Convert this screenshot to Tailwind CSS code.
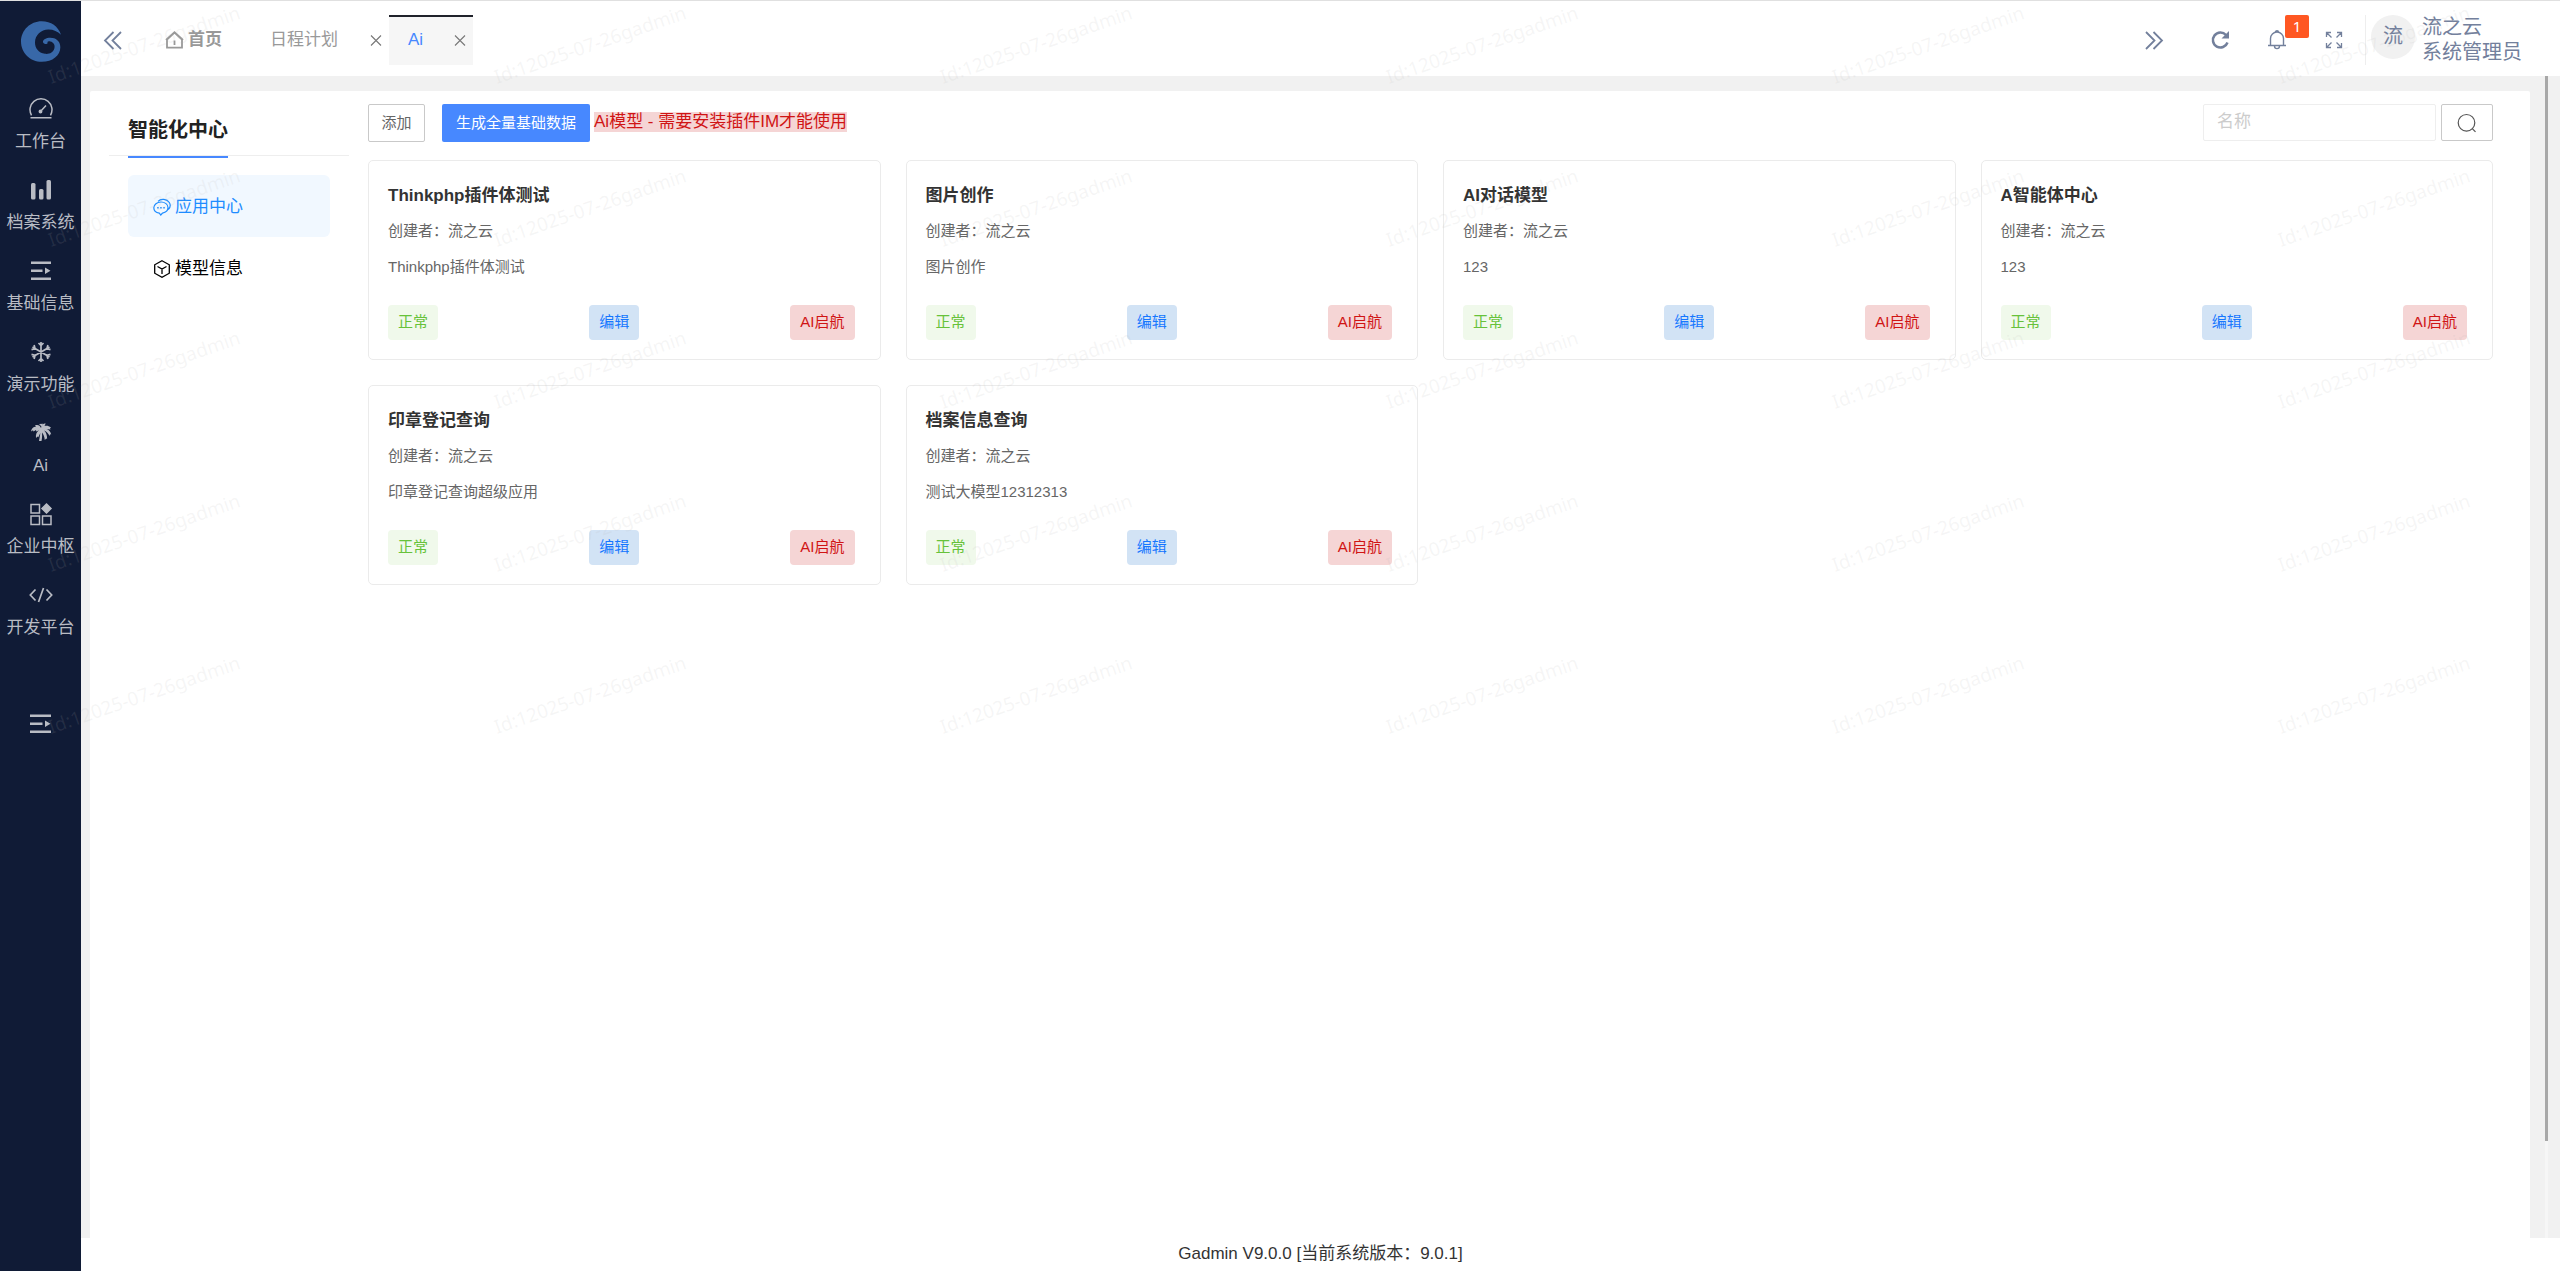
<!DOCTYPE html>
<html lang="zh-CN">
<head>
    <meta charset="UTF-8">
    <meta name="viewport" content="width=device-width, initial-scale=1.0">
    <title>Gadmin</title>
    <script src="https://cdn.jsdelivr.net/npm/@tailwindcss/browser@4"></script>
</head>
<body class="bg-white font-['Liberation_Sans','Noto_Sans_CJK_SC',sans-serif] text-[17px] text-[#333]">
    <div class="relative flex h-screen overflow-hidden border-t border-[#e0e0e0]">
        <!-- Sidebar -->
        <nav class="flex w-[81px] shrink-0 flex-col items-center bg-[#101b36] text-[#b9bcc4]">
            <a href="#" aria-label="Gadmin" class="mt-5 mb-[23px] block">
                <svg class="h-[41px] w-10" viewBox="0 0 120 122" fill="#3868a8"><path d="M120 41C112 15 90 0 62 0 28 0 0 27 0 61s28 61 62 61c33 0 56-20 56-44 0-18-14-28-30-28-13 0-22 5-22 12 0 6 8 9 14 4-2-5 2-7 8-5 10 2 15 11 12 21-3 12-16 18-28 16-20-3-30-18-30-34 0-22 18-39 40-39 16 0 28 6 38 16z"/></svg>
            </a>
            <a href="#" class="flex h-[81px] flex-col items-center gap-[9px] pt-3 leading-6 whitespace-nowrap">
                <svg class="size-6" viewBox="0 0 24 24" fill="none" stroke="currentColor" stroke-width="1.5"><path d="M2.5 18.3A11 11 0 1 1 21.500 18.300M1.500 20.700h21M11 15l6-6.500" /><circle cx="11.500" cy="14.500" r="1.200" fill="currentColor"/></svg>
                工作台
            </a>
            <a href="#" class="flex h-[81px] flex-col items-center gap-[9px] pt-3 leading-6 whitespace-nowrap">
                <svg class="size-6" viewBox="0 0 24 24" fill="currentColor"><rect x="2" y="5" width="4.500" height="16.500" rx="1.500"/><rect x="10" y="11" width="4.500" height="10.500" rx="1.500"/><rect x="17.500" y="2" width="4.500" height="19.500" rx="1.500"/></svg>
                档案系统
            </a>
            <a href="#" class="flex h-[81px] flex-col items-center gap-[9px] pt-3 leading-6 whitespace-nowrap">
                <svg class="size-6" viewBox="0 0 24 24" fill="currentColor"><path d="M2 2.500h20v2.600H2zM2 10.500h11.500v2.600H2zM2 18.500h20v2.600H2zM16 8.500l5.500 3.300L16 15z"/></svg>
                基础信息
            </a>
            <a href="#" class="flex h-[81px] flex-col items-center gap-[9px] pt-3 leading-6 whitespace-nowrap">
                <svg class="size-6" viewBox="0 0 24 24" fill="none" stroke="currentColor" stroke-width="1.700"><path d="M12 2v20M3.500 7l17 10M20.500 7l-17 10M9.500 3L12 5.500 14.500 3M9.500 21l2.500-2.500 2.500 2.500M2.500 9.600l3.600-1-1-3.600M21.500 14.400l-3.600 1 1 3.600M21.500 9.600l-3.600-1 1-3.600M2.500 14.400l3.600 1-1 3.600"/></svg>
                演示功能
            </a>
            <a href="#" class="flex h-[81px] flex-col items-center gap-[9px] pt-3 leading-6 whitespace-nowrap">
                <svg class="size-6" viewBox="0 0 24 24" fill="currentColor"><path d="M12 7C11 4.500 9 3.500 6 4.500l1 1.200C4.500 5.500 2.500 7.500 2 10.500l2-1.200.5 1.200L7 9l.3 1.500L10 9.200C7.500 11 6.500 13.500 7 17l1.500-1.500.8.8 2-4.300C11 15 10.500 17 10 20h2.500c.6-3 .8-5 .5-8.500 1.500 2 2.500 4 2.800 7.500l1.500-1.500.8.500c0-4-1-6.500-3-8.500 2.200.7 4 2.500 5.500 5.500l.4-1.800 1.200.3C21.500 10.500 20 9 17.500 8l4 .5-.5-1.300 1-.7C19.500 4.500 17.500 4.300 15.500 5l1.200-2.500c-2-.5-3.800.8-4.700 4.500z"/><path d="M10 3l4-.3L13 6z"/></svg>
                Ai
            </a>
            <a href="#" class="flex h-[81px] flex-col items-center gap-[9px] pt-3 leading-6 whitespace-nowrap">
                <svg class="size-6" viewBox="0 0 24 24" fill="none" stroke="currentColor" stroke-width="1.500"><path d="M2 2.500h8.500V11H2zM2 14h8.500v8.500H2zM13.500 14H22v8.500h-8.500z"/><path d="M17.500 2L22 6.500 17.500 11 13 6.500z" fill="currentColor"/></svg>
                企业中枢
            </a>
            <a href="#" class="flex h-[81px] flex-col items-center gap-[9px] pt-3 leading-6 whitespace-nowrap">
                <svg class="size-6" viewBox="0 0 24 24" fill="none" stroke="currentColor" stroke-width="1.700"><path d="M6.500 6.500L1.300 12l5.200 5.500M17.500 6.500l5.200 5.500-5.200 5.500M14.500 5l-5 14"/></svg>
                开发平台
            </a>
            <button aria-label="展开菜单" class="mt-[60px]">
                <svg class="size-6" viewBox="0 0 24 24" fill="currentColor"><path d="M1 2.500h21v2.600H1zM1 10.500h12.500v2.600H1zM1 18.500h21v2.600H1zM16 8.500l5.500 3.300L16 15z"/></svg>
            </button>
        </nav>

        <div class="flex min-w-0 flex-1 flex-col">
            <!-- Header -->
            <header class="flex h-[75px] shrink-0 items-center bg-white pt-[3px] text-[#73809c]">
                <button aria-label="向左" class="ml-[22px]">
                    <svg class="size-5" viewBox="0 0 20 20" fill="none" stroke="currentColor" stroke-width="1.800"><path d="M10.500 2L2 10.500l8.500 8.500M18 2l-8.500 8.500L18 19"/></svg>
                </button>
                <a href="#" class="ml-[42px] flex items-center gap-1 font-bold text-[#999]">
                    <svg class="size-[19px]" viewBox="0 0 19 19" fill="none" stroke="currentColor" stroke-width="1.800"><path d="M2 8.500v8.200h15V8.500L9.500 1.700zM1 9l8.500-7.700L18 9M9.500 9.500v4.500"/></svg>
                    首页
                </a>
                <div class="ml-[35px] flex items-center px-[13px] text-[#999]">
                    <a href="#" class="w-[100px]">日程计划</a>
                    <button aria-label="关闭日程计划" class="size-3">
                        <svg class="size-3" viewBox="0 0 12 12" fill="none" stroke="#777" stroke-width="1.100"><path d="M1 1.500l10 10M11 1.500l-10 10"/></svg>
                    </button>
                </div>
                <div class="-ml-[6px] flex h-[50px] items-center border-t-2 border-[#20222a] bg-[#f6f6f6] pr-[7px] pl-[19px]">
                    <a href="#" class="w-[46px] pb-0.5 text-[#4788ff]">Ai</a>
                    <button aria-label="关闭Ai" class="size-3">
                        <svg class="size-3" viewBox="0 0 12 12" fill="none" stroke="#777" stroke-width="1.100"><path d="M1 .5l10 10M11 .5l-10 10"/></svg>
                    </button>
                </div>
                <button aria-label="向右" class="ml-auto">
                    <svg class="size-5" viewBox="0 0 20 20" fill="none" stroke="currentColor" stroke-width="1.800"><path d="M2 2l8.500 8.500L2 19M9.500 2l8.500 8.500L9.500 19"/></svg>
                </button>
                <button aria-label="刷新" class="ml-[46px]">
                    <svg class="size-5" viewBox="0 0 20 20" fill="none" stroke="currentColor" stroke-width="2.500"><path d="M17.500 12.500A7.500 7.500 0 1 1 16 5"/><path d="M19 1v7.500h-7.500z" fill="currentColor" stroke="none"/></svg>
                </button>
                <button aria-label="消息" class="relative ml-[37px]">
                    <svg class="size-5" viewBox="0 0 20 20" fill="none" stroke="currentColor" stroke-width="1.400"><path d="M3.500 15V8.500a6.500 6.500 0 0 1 13 0V15M1 15.500h18M8.500 2.200c0-2 3-2 3 0M7.500 16c0 3.500 5 3.500 5 0"/></svg>
                    <span class="absolute bottom-3 left-[18px] h-[23px] w-6 rounded-xs bg-[#ff5722] text-center font-['Noto_Sans',sans-serif] text-[15px] leading-[22px] text-white">1</span>
                </button>
                <button aria-label="全屏" class="ml-[38px]">
                    <svg class="size-[18px]" viewBox="0 0 18 18" fill="none" stroke="currentColor" stroke-width="1.300"><path d="M1.500 6V1.500H6M12 1.500h4.500V6M16.500 12v4.500H12M6 16.500H1.500V12M2 2l4.500 4.500M16 2l-4.500 4.500M16 16l-4.500-4.500M2 16l4.500-4.500"/></svg>
                </button>
                <a href="#" class="ml-[22px] flex h-[50px] border-l border-[#eee] pr-[38px] pl-[5px] text-xl leading-[25px]">
                    <span class="mr-[7px] size-11 rounded-full bg-[#f1f1f1] text-center leading-[42px]">流</span>
                    <span>流之云<br>系统管理员</span>
                </a>
            </header>

            <div class="flex min-h-0 flex-1 bg-[#f1f1f1]">
                <main class="mt-[15px] mr-[15px] ml-[9px] flex flex-1 rounded-t-xs bg-white pr-[37px] pl-[19px]">
                    <!-- Left menu -->
                    <aside class="w-60 shrink-0">
                        <div class="flex h-[65px] border-b border-[#eee] px-[19px]">
                            <h2 class="-mb-[3px] border-b-2 border-[#4788ff] text-xl leading-[78px] font-bold text-[#222]">智能化中心</h2>
                        </div>
                        <div class="px-[19px] pt-[19px]">
                            <a href="#" class="flex h-[62px] items-center gap-1 rounded-md bg-[#f1f8ff] pt-0.5 pl-[25px] text-[#1e8cff]">
                                <svg class="size-[18px]" viewBox="0 0 18 18" fill="none" stroke="currentColor" stroke-width="1.200"><path d="M8 4c4 0 7 2.400 7 5.600 0 3-2.500 5-5.500 5.500L7.800 17l-1.500-1.900C3 14.600.8 12.600.8 9.800.8 6.500 4 4 8 4zM5 3.300C8 .3 14 1 16.300 4.500c1.600 2.600 1 5-1 7"/><path d="M4.200 9.800h1.500M7.200 9.800h1.500M10.300 9.800h1.500" stroke-width="1.600"/></svg>
                                应用中心
                            </a>
                            <a href="#" class="flex h-[62px] items-center gap-1 pt-0.5 pl-[25px] text-black">
                                <svg class="size-[18px]" viewBox="0 0 18 18" fill="none" stroke="currentColor" stroke-width="1.300"><path d="M9 .8l7.300 4v8.400L9 17.300l-7.300-4.100V4.800zM4.500 6.500L9 9l4.500-2.500M9 9v5"/></svg>
                                模型信息
                            </a>
                        </div>
                    </aside>

                    <section class="ml-[19px] min-w-0 flex-1 pt-[13px]">
                        <!-- Toolbar -->
                        <div class="flex h-[38px] text-[15px]">
                            <button class="w-[57px] rounded-xs border border-[#c9c9c9] text-[#666]">添加</button>
                            <button class="ml-[17px] rounded-xs bg-[#4788ff] px-[14px] text-white">生成全量基础数据</button>
                            <p class="ml-1 pt-2 text-[17px] leading-5"><span class="block bg-[#f5d5d5] text-[#d01414]">Ai模型 - 需要安装插件IM才能使用</span></p>
                            <form class="ml-auto flex h-[37px] gap-[5px]">
                                <input type="text" aria-label="名称" placeholder="名称" class="w-[233px] rounded-xs border border-[#eee] px-[13px] pb-0.5 text-[17px] placeholder:text-[#ccc]">
                                <button type="button" aria-label="搜索" class="flex w-[52px] items-center justify-center rounded-xs border border-[#c9c9c9] text-[#555]">
                                    <svg class="size-5" viewBox="0 0 20 20" fill="none" stroke="currentColor" stroke-width="1.200"><circle cx="9.500" cy="9.800" r="8.300"/><path d="M15.500 15.800l3 3"/></svg>
                                </button>
                            </form>
                        </div>

                        <div id="appList" class="mt-[18px] grid grid-cols-4 gap-[25px]"></div>
                    </section>
                </main>
                <!-- Scroll track -->
                <div class="mr-3 w-[3px] bg-[#f6f6f6]">
                    <div class="h-11/12 bg-[#a8a8a8]"></div>
                </div>
            </div>

            <footer class="h-[33px] shrink-0 bg-white text-center leading-8">Gadmin V9.0.0 [当前系统版本：9.0.1]</footer>
        </div>

        <svg id="watermark" class="pointer-events-none absolute inset-0 size-full fill-[#b4b4b4]/12 font-['Noto_Sans',sans-serif] text-[19px]" aria-hidden="true"></svg>
    </div>

    <script>
        const apps = [
            { name: 'Thinkphp插件体测试', desc: 'Thinkphp插件体测试' },
            { name: '图片创作', desc: '图片创作' },
            { name: 'AI对话模型', desc: '123' },
            { name: 'A智能体中心', desc: '123' },
            { name: '印章登记查询', desc: '印章登记查询超级应用' },
            { name: '档案信息查询', desc: '测试大模型12312313' }
        ];

        document.getElementById('appList').innerHTML = apps.map(app => `
            <div class="h-[200px] rounded-[5px] border border-[#ebebeb] pt-[23px] pr-[25px] pl-[19px] text-[15px] text-[#666]">
                <h3 class="text-[17px] leading-6 font-bold text-[#333]">${app.name}</h3>
                <p class="mt-[11px] leading-6">创建者：流之云</p>
                <p class="mt-3 leading-6">${app.desc}</p>
                <div class="mt-[26px] flex h-[35px] justify-between leading-[33px]">
                    <span class="rounded-sm bg-[#f0f9eb] px-[10px] text-[#67c23a]">正常</span>
                    <button class="rounded-sm bg-[#d2e3f5] px-[10px] pb-0.5 text-[#1677ff]">编辑</button>
                    <button class="rounded-sm bg-[#f5d5d5] px-[10px] pb-0.5 text-[#d01414]">AI启航</button>
                </div>
            </div>
        `).join('');

        // Watermark
        function drawWatermark() {
            let marks = '';
            for (let row = 0; row < 5; row++) {
                for (let x = 51; x < window.innerWidth; x += 446) {
                    const y = Math.round(83 + row * 162.5);
                    marks += `<text transform="translate(${x} ${y}) rotate(-19)">Id:12025-07-26gadmin</text>`;
                }
            }
            document.getElementById('watermark').innerHTML = marks;
        }
        drawWatermark();
        window.addEventListener('resize', drawWatermark);
    </script>
</body>
</html>
